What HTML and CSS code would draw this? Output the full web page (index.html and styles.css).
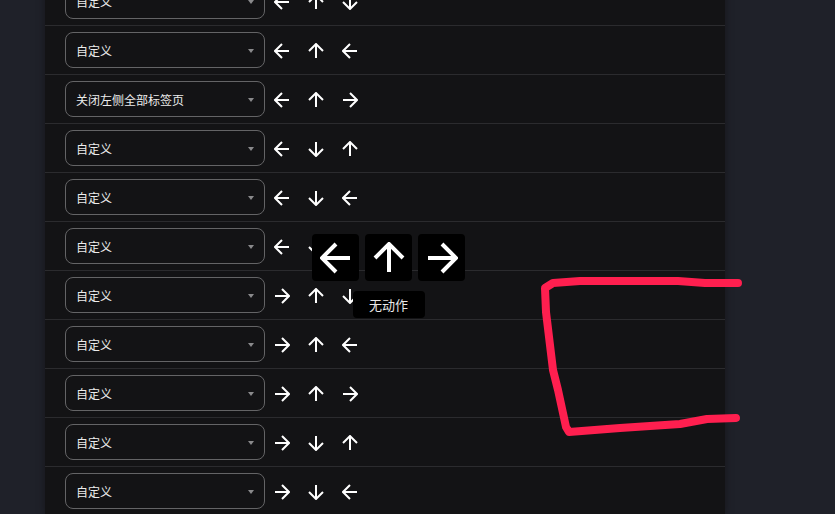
FILE: index.html
```html
<!DOCTYPE html>
<html lang="zh-CN">
<head>
    <meta charset="UTF-8">
    <meta name="viewport" content="width=device-width, initial-scale=1.0">
    <title>手势设置</title>
    <link rel="stylesheet" href="styles.css">
</head>
<body>
    <svg class="defs" width="0" height="0">
        <symbol id="a-left" viewBox="0 0 16 16"><path d="M15 8H1.5M8 1L1 8l7 7"/></symbol>
        <symbol id="a-right" viewBox="0 0 16 16"><path d="M1 8h13.5M8 1l7 7-7 7"/></symbol>
        <symbol id="a-up" viewBox="0 0 16 16"><path d="M8 15V1.5M1 8l7-7 7 7"/></symbol>
        <symbol id="a-down" viewBox="0 0 16 16"><path d="M8 1v13.5M1 8l7 7 7-7"/></symbol>
    </svg>

    <div class="panel">
        <div class="row">
            <div class="select"><span>自定义</span><i class="caret"></i></div>
            <div class="gesture"><svg><use href="#a-left"/></svg><svg><use href="#a-up"/></svg><svg><use href="#a-down"/></svg></div>
        </div>
        <div class="row">
            <div class="select"><span>自定义</span><i class="caret"></i></div>
            <div class="gesture"><svg><use href="#a-left"/></svg><svg><use href="#a-up"/></svg><svg><use href="#a-left"/></svg></div>
        </div>
        <div class="row">
            <div class="select"><span>关闭左侧全部标签页</span><i class="caret"></i></div>
            <div class="gesture"><svg><use href="#a-left"/></svg><svg><use href="#a-up"/></svg><svg><use href="#a-right"/></svg></div>
        </div>
        <div class="row">
            <div class="select"><span>自定义</span><i class="caret"></i></div>
            <div class="gesture"><svg><use href="#a-left"/></svg><svg><use href="#a-down"/></svg><svg><use href="#a-up"/></svg></div>
        </div>
        <div class="row">
            <div class="select"><span>自定义</span><i class="caret"></i></div>
            <div class="gesture"><svg><use href="#a-left"/></svg><svg><use href="#a-down"/></svg><svg><use href="#a-left"/></svg></div>
        </div>
        <div class="row">
            <div class="select"><span>自定义</span><i class="caret"></i></div>
            <div class="gesture"><svg><use href="#a-left"/></svg><svg><use href="#a-down"/></svg><svg><use href="#a-right"/></svg></div>
        </div>
        <div class="row">
            <div class="select"><span>自定义</span><i class="caret"></i></div>
            <div class="gesture"><svg><use href="#a-right"/></svg><svg><use href="#a-up"/></svg><svg><use href="#a-down"/></svg></div>
        </div>
        <div class="row">
            <div class="select"><span>自定义</span><i class="caret"></i></div>
            <div class="gesture"><svg><use href="#a-right"/></svg><svg><use href="#a-up"/></svg><svg><use href="#a-left"/></svg></div>
        </div>
        <div class="row">
            <div class="select"><span>自定义</span><i class="caret"></i></div>
            <div class="gesture"><svg><use href="#a-right"/></svg><svg><use href="#a-up"/></svg><svg><use href="#a-right"/></svg></div>
        </div>
        <div class="row">
            <div class="select"><span>自定义</span><i class="caret"></i></div>
            <div class="gesture"><svg><use href="#a-right"/></svg><svg><use href="#a-down"/></svg><svg><use href="#a-up"/></svg></div>
        </div>
        <div class="row">
            <div class="select"><span>自定义</span><i class="caret"></i></div>
            <div class="gesture"><svg><use href="#a-right"/></svg><svg><use href="#a-down"/></svg><svg><use href="#a-left"/></svg></div>
        </div>
    </div>

    <!-- live gesture hint -->
    <div class="hint">
        <div class="hint-keys">
            <div class="key"><svg><use href="#a-left"/></svg></div>
            <div class="key"><svg><use href="#a-up"/></svg></div>
            <div class="key"><svg><use href="#a-right"/></svg></div>
        </div>
        <div class="hint-label">无动作</div>
    </div>

    <!-- mouse trail -->
    <svg class="trail" width="835" height="514" viewBox="0 0 835 514">
        <polyline points="738,283 705,283 678,281 620,281 580,281 553,283 545,288 546,312 553,370 558,390 566,427 569,432 620,428 680,424 707,419 736,418"/>
    </svg>
</body>
</html>
```

FILE: styles.css
```css
body {
    margin: 0;
    height: 514px;
    overflow: hidden;
    background-color: #1f2129;
    font-family: 'Noto Sans CJK SC', 'Noto Sans', sans-serif;
    color: #ececec;
}

.defs {
    position: absolute;
}

.panel {
    width: 680px;
    margin: -23px 0 0 45px;
    background-color: #131315;
    box-shadow: 0 0 8px rgba(0, 0, 0, 0.35);
}

.row {
    display: flex;
    align-items: center;
    height: 48px;
    padding: 0 20px;
    border-bottom: 1px solid #2b2b2e;
}

.select {
    display: flex;
    align-items: center;
    justify-content: space-between;
    box-sizing: border-box;
    width: 200px;
    height: 36px;
    padding: 1px 10px 0 10px;
    border: 1px solid #646466;
    border-radius: 8px;
    font-size: 12px;
}

.caret {
    width: 0;
    height: 0;
    border-left: 3.5px solid transparent;
    border-right: 3.5px solid transparent;
    border-top: 4px solid #8a8a8c;
}

.gesture {
    display: flex;
    gap: 18px;
    margin-left: 9px;
    padding-top: 2px;
}

.gesture svg {
    width: 16px;
    height: 16px;
}

svg use,
svg symbol path {
    fill: none;
    stroke: #fff;
    stroke-width: 2;
}

.hint {
    position: absolute;
    left: 312px;
    top: 234px;
    display: flex;
    flex-direction: column;
    align-items: center;
    gap: 10px;
}

.hint-keys {
    display: flex;
    gap: 6px;
}

.key {
    display: flex;
    align-items: center;
    justify-content: center;
    width: 47px;
    height: 47px;
    background-color: #000;
    border-radius: 4px;
}

.key svg {
    width: 32px;
    height: 32px;
}

.hint-label {
    width: 72px;
    height: 27px;
    line-height: 27px;
    text-align: center;
    background-color: #000;
    border-radius: 4px;
    font-size: 13px;
    color: #e8e8e8;
}

.trail {
    position: absolute;
    left: 0;
    top: 0;
}

.trail polyline {
    fill: none;
    stroke: #ff1f4f;
    stroke-width: 8;
    stroke-linecap: round;
    stroke-linejoin: round;
}
```
